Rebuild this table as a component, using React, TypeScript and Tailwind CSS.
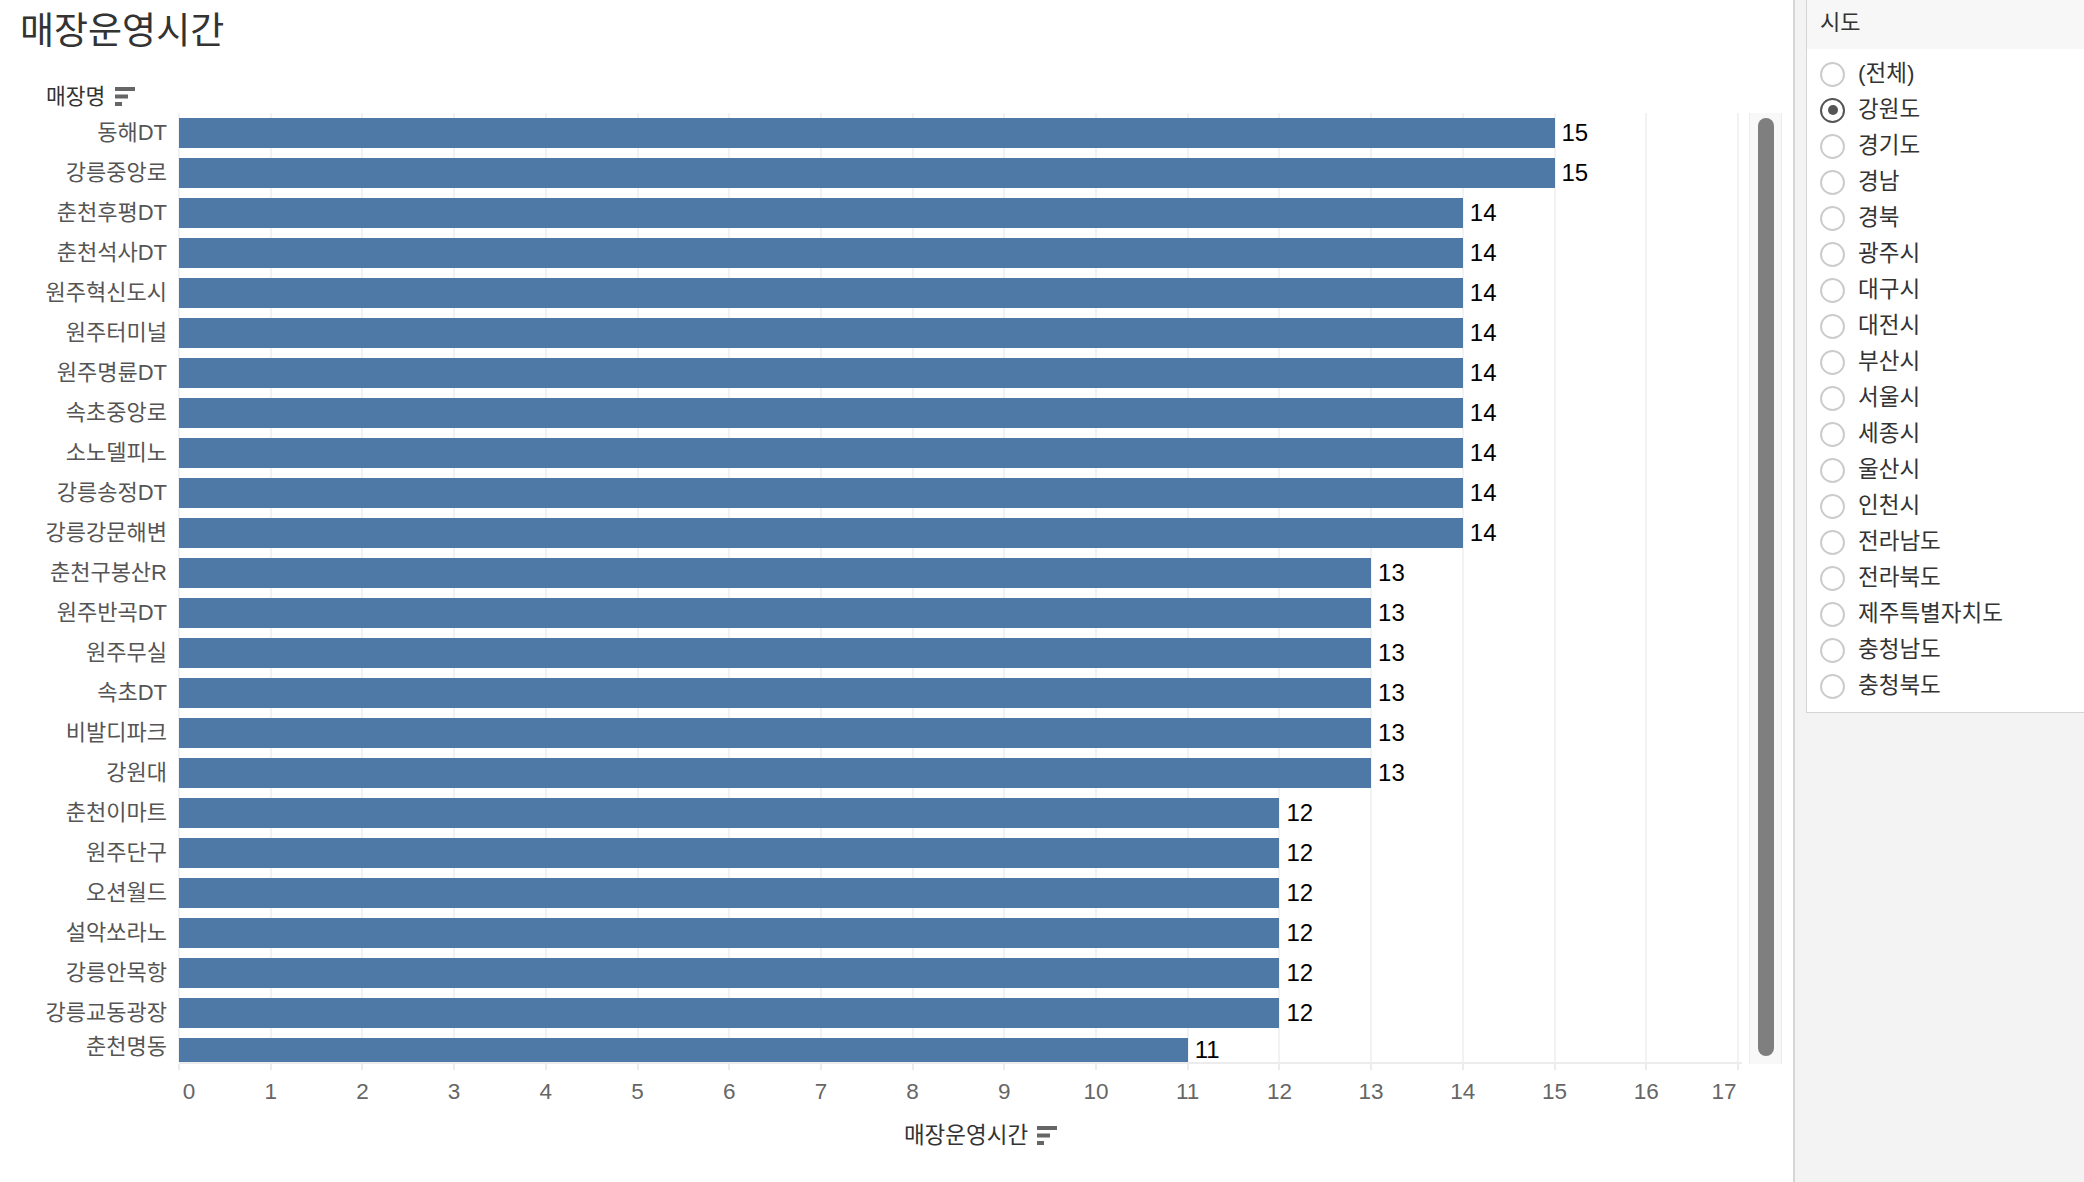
import React from "react";

const stores: [string, number][] = [
  ["동해DT", 15],
  ["강릉중앙로", 15],
  ["춘천후평DT", 14],
  ["춘천석사DT", 14],
  ["원주혁신도시", 14],
  ["원주터미널", 14],
  ["원주명륜DT", 14],
  ["속초중앙로", 14],
  ["소노델피노", 14],
  ["강릉송정DT", 14],
  ["강릉강문해변", 14],
  ["춘천구봉산R", 13],
  ["원주반곡DT", 13],
  ["원주무실", 13],
  ["속초DT", 13],
  ["비발디파크", 13],
  ["강원대", 13],
  ["춘천이마트", 12],
  ["원주단구", 12],
  ["오션월드", 12],
  ["설악쏘라노", 12],
  ["강릉안목항", 12],
  ["강릉교동광장", 12],
  ["춘천명동", 11],
];

const regions = [
  "(전체)",
  "강원도",
  "경기도",
  "경남",
  "경북",
  "광주시",
  "대구시",
  "대전시",
  "부산시",
  "서울시",
  "세종시",
  "울산시",
  "인천시",
  "전라남도",
  "전라북도",
  "제주특별자치도",
  "충청남도",
  "충청북도",
];

const UNIT = 91.7;
const ticks = Array.from({ length: 18 }, (_, i) => i);

const SortIcon = () => (
  <svg width="20" height="20" viewBox="0 0 20 20" fill="#666">
    <rect x="0" y="0" width="20" height="4" />
    <rect x="0" y="7.5" width="13" height="4" />
    <rect x="0" y="15" width="7" height="4" />
  </svg>
);

export default function App() {
  return (
    <div className="flex w-[2084px] h-[1182px] overflow-hidden bg-white font-['Liberation_Sans','Noto_Sans_CJK_KR',sans-serif]">
      {/* Chart pane */}
      <div className="w-[1793px] shrink-0 bg-white">
        <div className="h-[58px] pl-[20px] pt-[12px] text-[37px] leading-[40px] text-[#333]">
          매장운영시간
        </div>

        <div className="h-[55px] pt-[23px] pl-[46px] flex items-center gap-[10px] text-[21.5px] text-[#333]">
          <span>매장명</span>
          <SortIcon />
        </div>

        {/* Plot + scrollbar */}
        <div className="flex">
          <div className="relative w-[1742px] h-[949px] overflow-hidden">
            {ticks.map((t) => (
              <div
                key={t}
                className="absolute top-0 bottom-0 w-[2px] bg-[#f2f2f2]"
                style={{ left: 178 + t * UNIT }}
              />
            ))}
            {stores.map(([name, v], i) => {
              const last = i === stores.length - 1;
              return (
                <div key={name} className="relative flex h-[40px] items-center">
                  <div
                    className={
                      last
                        ? "w-[179px] shrink-0 pr-[12px] text-right text-[22px] text-[#555] leading-none -translate-y-[6px]"
                        : "w-[179px] shrink-0 pr-[12px] text-right text-[22px] text-[#555] leading-none"
                    }
                  >
                    {name}
                  </div>
                  <div className="h-[30px] bg-[#4e79a7]" style={{ width: v * UNIT }} />
                  <span
                    className={
                      last
                        ? "ml-[7px] text-[24px] text-black leading-none -translate-y-[3px]"
                        : "ml-[7px] text-[24px] text-black leading-none"
                    }
                  >
                    {v}
                  </span>
                </div>
              );
            })}
          </div>
          <div className="ml-[7px] w-[33px] h-[951px] bg-[#f8f8f8] border-x border-[#ececec] pt-[5px]">
            <div className="mx-auto w-[16px] h-[938px] rounded-full bg-[#7f7f7f]" />
          </div>
        </div>

        {/* X axis */}
        <div className="relative ml-[179px] w-[1563px] -mt-[2px] h-[2px] bg-[#ececec]" />
        <div className="relative ml-[179px] w-[1563px] h-[54px]">
          {ticks.map((t) => (
            <div
              key={t}
              className="absolute top-0 h-[6px] w-[2px] bg-[#ececec]"
              style={{ left: t * UNIT - 1 }}
            />
          ))}
          {ticks.map((t) => {
            const x = t === 0 ? 10 : t === 17 ? t * UNIT - 14 : t * UNIT;
            return (
              <span
                key={t}
                className="absolute top-[13px] -translate-x-1/2 text-[22.5px] leading-[30px] text-[#666]"
                style={{ left: x }}
              >
                {t}
              </span>
            );
          })}
        </div>
        <div className="ml-[179px] w-[1603px] flex justify-center items-center gap-[9px] h-[36px] text-[22.5px] text-[#333]">
          <span>매장운영시간</span>
          <SortIcon />
        </div>
      </div>

      {/* Filter pane */}
      <div className="flex-1 bg-[#f3f3f3] border-l-2 border-[#d6d6d6] pl-[11px]">
        <div className="h-[713px] bg-white border-l border-b border-[#d4d4d4]">
          <div className="h-[49px] bg-[#f7f7f7] pl-[13px] pb-[5px] flex items-center text-[22px] text-[#333]">
            시도
          </div>
          <div className="pt-[7px]">
            {regions.map((r) => {
              const checked = r === "강원도";
              return (
                <div key={r} className="h-[36px] pl-[13px] flex items-center gap-[13px]">
                  <div
                    className={
                      checked
                        ? "w-[25px] h-[25px] rounded-full border-2 border-[#555] flex items-center justify-center"
                        : "w-[25px] h-[25px] rounded-full border-2 border-[#cccccc]"
                    }
                  >
                    {checked && <div className="w-[10px] h-[10px] rounded-full bg-[#555]" />}
                  </div>
                  <span className="text-[22.5px] text-[#333] leading-none">{r}</span>
                </div>
              );
            })}
          </div>
        </div>
      </div>
    </div>
  );
}
